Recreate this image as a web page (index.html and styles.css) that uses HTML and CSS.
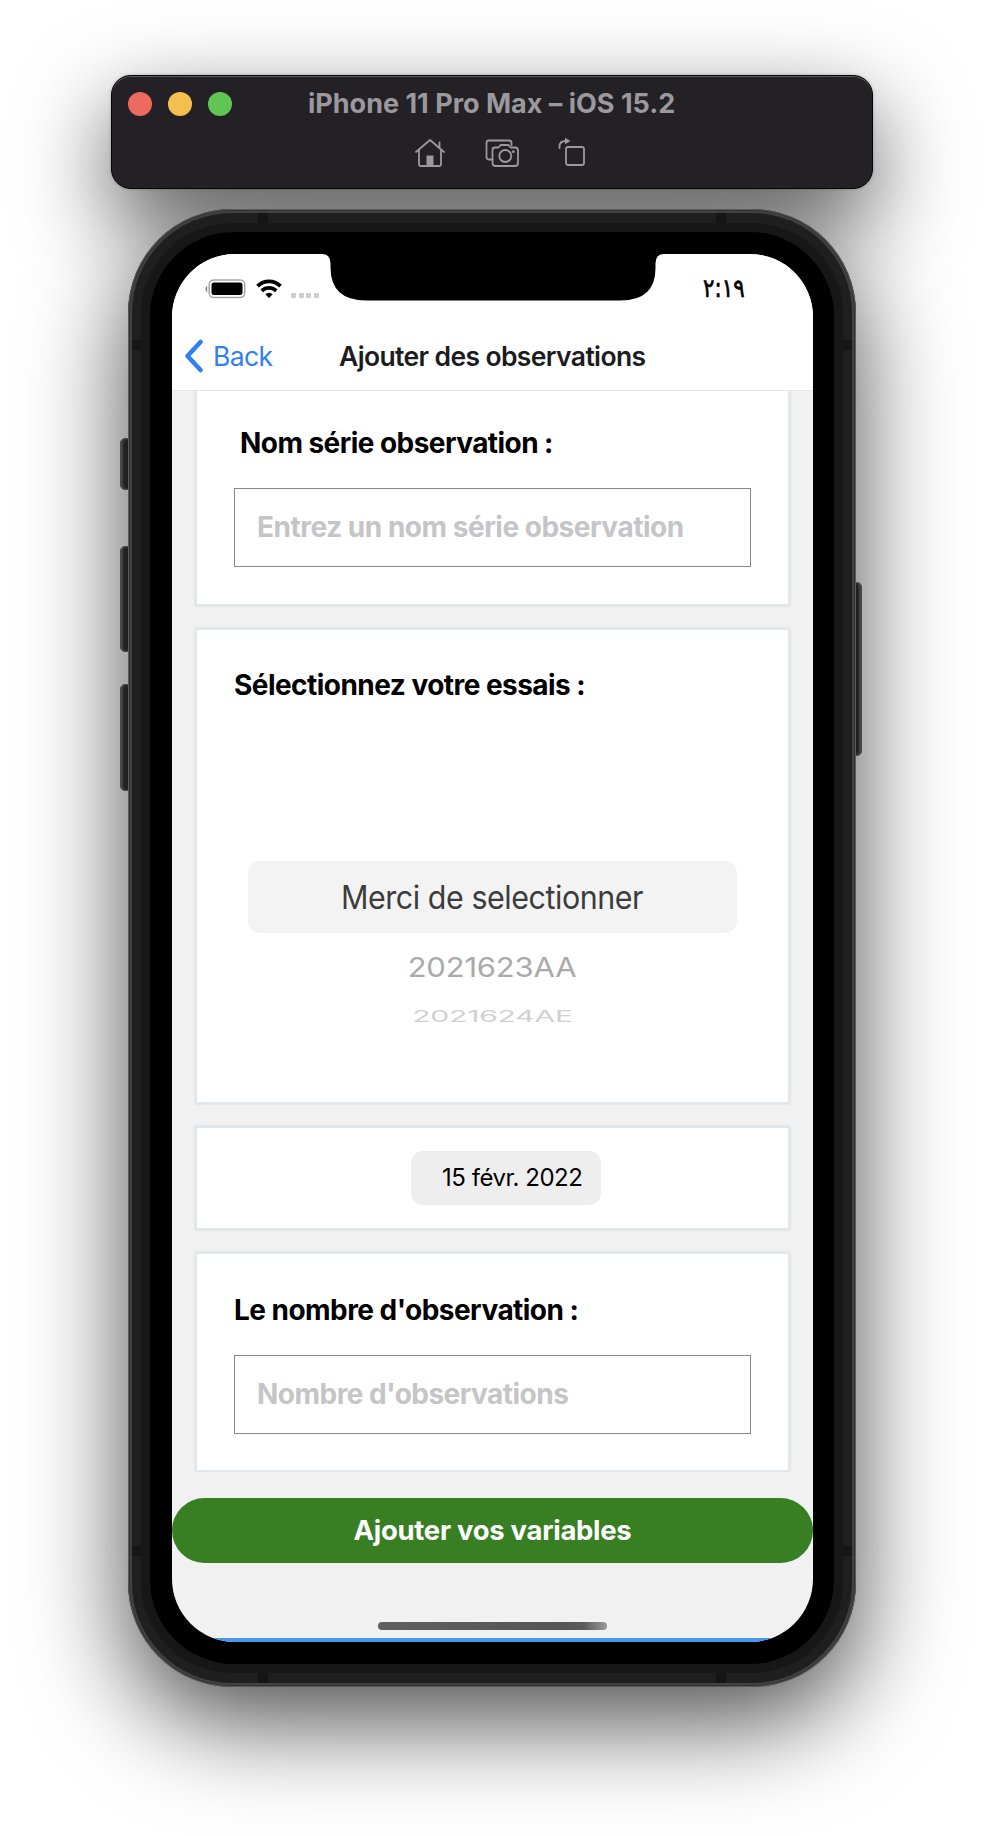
FILE: index.html
```html
<!DOCTYPE html>
<html lang="fr">
<head>
<meta charset="utf-8">
<title>iPhone 11 Pro Max – iOS 15.2</title>
<link rel="stylesheet" href="styles.css">
</head>
<body>
<header class="toolbar">
  <div class="titlebar">
    <div class="lights"><i class="light red"></i><i class="light amber"></i><i class="light green"></i></div>
    <h1 class="window-title"><span class="t-window">iPhone 11 Pro Max – iOS 15.2</span></h1>
  </div>
  <div class="tools">
    <svg class="tool" width="32" height="32" viewBox="0 0 32 32"><path d="M2 15 16 3l14 12M5 13v14.500q0 1.500 1.500 1.500h19q1.500 0 1.500-1.500V13M25.500 11V5.500"/><path class="solid" d="M12.500 18.500h7V29h-7z"/></svg>
    <svg class="tool" width="34" height="32" viewBox="0 0 34 32"><path d="M7.500 22.500H4q-2.500 0-2.500-2.500V6Q1.500 3.500 4 3.500h20q2.500 0 2.500 2.500v2"/><path d="M10 10.500h3.500l2-2.500h8l2 2.500H30q3 0 3 3V26q0 3-3 3H10.500q-3 0-3-3V13q0-2.500 2.500-2.500z"/><circle cx="20.300" cy="19" r="6"/><circle class="solid" cx="28.300" cy="14.700" r="1.400"/></svg>
    <svg class="tool" width="28" height="32" viewBox="0 0 28 32"><rect x="8" y="10" width="18" height="18" rx="2"/><path d="M1.500 11V9.500Q1.500 4 8 4"/><path class="solid" d="M7 .8 12.500 4 7 7.200z"/></svg>
  </div>
</header>

<main class="phone">
  <i class="key key-mute"></i><i class="key key-up"></i><i class="key key-down"></i><i class="key key-power"></i>
  <div class="frame"><div class="rim"><div class="bezel"><div class="screen">
    <svg class="notch" width="342" height="47" viewBox="0 0 342 47"><path d="M0 0h342q-8.500 0-8.500 9.500v4.500q0 32.500-35 32.500H44q-35 0-35.500-32.500V9.500Q8.500 0 0 0z"/></svg>
    <div class="status">
      <div class="status-left">
        <svg width="41" height="20" viewBox="0 0 41 20"><rect x="4.200" y="1" width="35.500" height="17.600" rx="4.500" fill="none" stroke="#a5a5a5" stroke-width="1.500"/><rect x="6.500" y="3.500" width="31" height="12.600" rx="2.500"/><path d="M2.200 6.500v7Q.3 12 .3 10t1.900-3.500z" fill="#888"/></svg>
        <svg class="wifi" width="26" height="20" viewBox="0 0 26 20"><g fill="none" stroke="#000" stroke-width="3.800"><path d="M1.500 7.200Q6.500 2.400 13 2.400t11.500 4.800"/><path d="M5.700 11.800Q9 8.900 13 8.900t7.300 2.900"/></g><path d="M9.300 15.300Q13 12.300 16.700 15.300L13 18.900z"/></svg>
        <span class="dots"><i></i><i></i><i></i><i></i></span>
      </div>
      <span class="time">٢:١٩</span>
    </div>
    <nav class="nav">
      <a class="back"><svg width="20" height="34" viewBox="0 0 20 34"><path d="M16.500 3 3.500 17l13 14" fill="none" stroke="#2f80f7" stroke-width="4.500" stroke-linecap="round" stroke-linejoin="round"/></svg><span class="t-back">Back</span></a>
      <h2 class="nav-title"><span class="t-nav">Ajouter des observations</span></h2>
    </nav>
    <div class="scroll">
      <section class="card card-name">
        <div class="label indent"><span class="t-name">Nom série observation :</span></div>
        <div class="input"><span class="t-ph1">Entrez un nom série observation</span></div>
      </section>
      <section class="card card-trial">
        <div class="label"><span class="t-trial">Sélectionnez votre essais :</span></div>
        <div class="picker">
          <div class="row selected"><span class="t-merci">Merci de selectionner</span></div>
          <div class="row near"><span class="t-near">2021623AA</span></div>
          <div class="row far"><span class="t-far">2021624AE</span></div>
        </div>
      </section>
      <section class="card card-date"><div class="date"><span class="t-date">15 févr. 2022</span></div></section>
      <section class="card card-count">
        <div class="label"><span class="t-count">Le nombre d'observation :</span></div>
        <div class="input"><span class="t-ph2">Nombre d'observations</span></div>
      </section>
    </div>
    <div class="submit"><span class="t-submit">Ajouter vos variables</span></div>
    <div class="home"></div>
    <div class="tabline"></div>
  </div></div></div></div>
  <i class="band band-tl"></i><i class="band band-tr"></i><i class="band band-bl"></i><i class="band band-br"></i>
  <i class="band side-lt"></i><i class="band side-rt"></i><i class="band side-lb"></i><i class="band side-rb"></i>
</main>
</body>
</html>
```
FILE: styles.css
```css
* { box-sizing: border-box; }
body { margin: 0; width: 984px; height: 1836px; overflow: hidden; padding-top: 75px; background: #fff; font-family: Inter, "Liberation Sans", sans-serif; color: #000; }
h1, h2 { margin: 0; font-size: inherit; }
span { white-space: nowrap; }

.toolbar { position: relative; width: 762px; height: 114px; margin-left: 111px; border: 1px solid #050505; border-radius: 20px; background: #232126; box-shadow: inset 0 1px 0 #5b5c5d, 0 34px 90px rgba(0,0,0,.65), 0 0 3px rgba(0,0,0,.25); }
.titlebar { display: grid; grid-template-columns: 196px 1fr; align-items: center; height: 56px; }
.lights { display: flex; gap: 16px; padding-left: 16px; }
.light { width: 24px; height: 24px; border-radius: 50%; }
.red { background: #ed6a5e; }
.amber { background: #f5bf4f; }
.green { background: #61c554; }
.window-title { height: 54px; line-height: 53px; font-size: 27px; font-weight: 700; color: #9b989e; }
.tools { display: flex; gap: 39px; padding: 5px 0 0 302px; }
.tool { fill: none; stroke: #9b989e; stroke-width: 1.8; stroke-linecap: round; stroke-linejoin: round; }
.tool .solid { fill: #9b989e; stroke: none; }

.phone { position: relative; width: 728px; height: 1478px; margin: 20px 0 0 128px; padding: 4px; border-radius: 104px; background: #414141; box-shadow: inset 0 0 0 1px #585858, inset 0 0 0 2px #333; }
.phone::before { content: ""; position: absolute; z-index: -2; inset: 0; border-radius: 104px; box-shadow: 0 34px 100px rgba(0,0,0,.7); }
.frame { height: 1470px; padding: 10px 9px; border-radius: 100px; background: #1f1f1f; }
.rim { height: 1450px; padding: 9px; border-radius: 91px; background: #171717; }
.bezel { height: 1432px; padding: 22px 21px 22px 22px; border-radius: 84px; background: #000; }
.screen { position: relative; display: flex; flex-direction: column; height: 1388px; overflow: hidden; border-radius: 63px; background: #f1f1f1; }
.key { position: absolute; z-index: -1; left: -8px; width: 12px; border: 1px solid #4b4b4b; border-radius: 5px; background: #202020; box-shadow: inset 2px 0 2px #484848; }
.key-mute { top: 229px; height: 52px; }
.key-up { top: 337px; height: 106px; }
.key-down { top: 475px; height: 107px; }
.key-power { top: 373px; left: 722px; height: 174px; box-shadow: inset -2px 0 2px #484848; }
.band { position: absolute; width: 10px; height: 10px; background: #151515; }
.band-tl { left: 130px; top: 4px; }
.band-tr { left: 588px; top: 4px; }
.band-bl { left: 130px; bottom: 4px; }
.band-br { left: 588px; bottom: 4px; }
.side-lt, .side-lb { left: 4px; width: 9px; }
.side-rt, .side-rb { right: 4px; width: 9px; }
.side-lt, .side-rt { top: 131px; }
.side-lb, .side-rb { top: 1337px; }

.notch { position: absolute; z-index: 2; left: 150px; top: 0; }
.status { display: flex; flex: none; justify-content: space-between; height: 68px; padding: 25px 68px 0 33px; background: #fff; }
.status-left { display: flex; align-items: flex-start; }
.wifi { margin: 0 0 0 10px; }
.dots { display: flex; gap: 2.700px; margin: 14px 0 0 9px; }
.dots i { width: 5px; height: 5px; border-radius: 1px; background: #ccc; }
.time { font: 400 26px/18px "DejaVu Sans", sans-serif; -webkit-text-stroke: .7px #000; transform: scaleX(.82); transform-origin: 100% 50%; }
.nav { display: grid; grid-template-columns: 167px 1fr; align-items: center; flex: none; height: 69px; padding-bottom: 1px; border-bottom: 1px solid #e6e7e8; background: #fff; }
.back { display: flex; align-items: center; gap: 9px; padding-left: 12px; font-size: 26.500px; color: #2f80f7; }
.nav-title { font-size: 26.500px; font-weight: 600; color: #1c1c1e; }

.t-back { letter-spacing: -.6px; }
.t-nav { letter-spacing: -.63px; }
.t-name { letter-spacing: -.56px; }
.t-ph1 { letter-spacing: -.48px; }
.t-trial { letter-spacing: -.54px; }
.t-near, .t-far { letter-spacing: -.2px; }
.t-date { letter-spacing: -.47px; }
.t-count { letter-spacing: -.54px; }
.t-ph2 { letter-spacing: -.52px; }
.t-submit { letter-spacing: -.3px; }

.scroll { display: flex; flex-direction: column; gap: 22px; flex: none; height: 1081px; padding: 0 23px; overflow: hidden; }
.card { flex: none; padding: 0 37px; border: 2px solid #e1e6eb; background: #fff; box-shadow: 0 0 2px rgba(0,0,0,.13); }
.card-name { height: 215px; padding-top: 32px; border-top: 0; }
.card-trial { height: 476px; padding-top: 35px; }
.card-date { height: 104px; padding: 23px 0 0 214px; }
.card-count { height: 220px; padding-top: 36px; }
.label { height: 40px; line-height: 41px; font-size: 28px; font-weight: 700; }
.indent { padding-left: 6px; }
.input { display: flex; align-items: center; height: 79px; margin-top: 25px; padding: 0 0 2px 22px; border: 1px solid #888; font-size: 28px; font-weight: 700; color: #c5c5c7; }
.picker { display: flex; flex-direction: column; margin: 156px 14px 0; }
.row { display: flex; align-items: center; justify-content: center; }
.selected { height: 72px; border-radius: 12px; background: #f3f3f3; font-size: 32px; color: #3c3c3c; }
.selected span { letter-spacing: -.45px; transform: scaleX(.95); }
.near { height: 67px; padding-right: 1px; font-size: 31px; color: #aaa; }
.near span { transform: scaleY(.89); }
.far { height: 32px; font-size: 30px; color: #d0d0d0; }
.far span { transform: scaleY(.53); }
.date { width: 190px; height: 54px; padding-left: 31px; border-radius: 12px; background: #eee; font-size: 24px; line-height: 54px; }
.submit { flex: none; height: 65px; margin-top: 26px; border-radius: 33px; background: #387f23; color: #fff; font-size: 27.500px; font-weight: 700; line-height: 65px; text-align: center; }
.home { flex: none; width: 229px; height: 8px; margin: 59px 0 0 206px; border-radius: 4px; background: linear-gradient(90deg, #606060 0, #555 80%, #5b5b5b 90%, #999 100%); }
.tabline { height: 4px; margin-top: auto; background: #4398ee; }
```
